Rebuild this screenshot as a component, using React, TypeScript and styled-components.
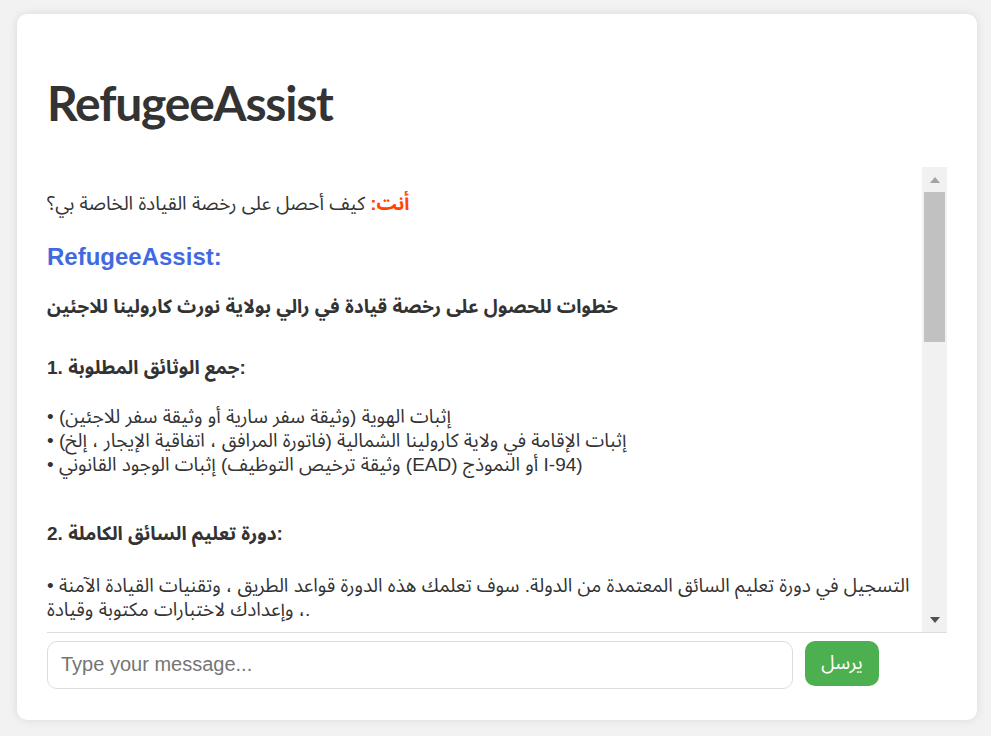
import styled, { createGlobalStyle } from 'styled-components';

const GlobalStyle = createGlobalStyle`
  html, body {
    margin: 0;
    padding: 0;
    background: #f2f2f2;
  }
  body {
    font-family: "Liberation Sans", Arial, "Noto Sans Arabic", "DejaVu Sans", sans-serif;
    color: #333;
  }
`;

const Page = styled.div`
  padding: 14px 14px 16px 17px;
`;

const Card = styled.div`
  width: 960px;
  box-sizing: border-box;
  background: #fff;
  border-radius: 10px;
  box-shadow: 0 0 10px rgba(0, 0, 0, 0.1);
  padding: 30px 30px 31px;
`;

const Title = styled.h1`
  margin: 30px 0 35px;
  font-family: Lato, "Open Sans", sans-serif;
  font-weight: 700;
  font-size: 48px;
  line-height: 1.2;
  letter-spacing: -1.2px;
  color: #333;
`;

const ChatFrame = styled.div`
  display: flex;
  height: 465px;
  border-bottom: 1px solid #ddd;
`;

const ChatScroll = styled.div`
  flex: 1;
  min-width: 0;
  overflow: hidden;
  padding-right: 12px;
  font-size: 19px;
  line-height: 24px;
`;

const ScrollTrack = styled.div`
  width: 25px;
  flex-shrink: 0;
  display: flex;
  flex-direction: column;
  background: #f1f1f1;
`;

const ArrowButton = styled.div`
  height: 25px;
  display: flex;
  align-items: center;
  justify-content: center;
`;

const Arrow = styled.span<{ $dir: 'up' | 'down'; $color: string }>`
  width: 0;
  height: 0;
  border-left: 5.5px solid transparent;
  border-right: 5.5px solid transparent;
  ${(p) =>
    p.$dir === 'up'
      ? `border-bottom: 6px solid ${p.$color}; margin-top: 1px;`
      : `border-top: 6px solid ${p.$color}; margin-top: 1px;`}
`;

const ThumbLane = styled.div`
  flex: 1;
  padding: 0 2px;
`;

const Thumb = styled.div`
  height: 150px;
  background: #c1c1c1;
`;

const UserLine = styled.p`
  margin: 25px 0 0;
`;

const UserTag = styled.strong`
  color: #ff4500;
`;

const BotLabel = styled.div`
  margin-top: 28px;
  font-size: 24px;
  line-height: 26px;
  font-weight: 700;
  color: #4169e1;
`;

const BoldLine = styled.p<{ $gap: number }>`
  margin: ${(p) => p.$gap}px 0 0;
  font-weight: 700;
`;

const BulletBlock = styled.div<{ $gap: number }>`
  margin-top: ${(p) => p.$gap}px;
`;

const Bullet = styled.div``;

const InputRow = styled.form`
  display: flex;
  align-items: flex-start;
  gap: 12px;
  margin-top: 8px;
`;

const MessageInput = styled.input`
  width: 746px;
  height: 48px;
  box-sizing: border-box;
  padding: 0 13px;
  border: 1px solid #ddd;
  border-radius: 10px;
  font-family: "Liberation Sans", Arial, sans-serif;
  font-size: 20px;
  color: #333;
  outline: none;

  &::placeholder {
    color: #757575;
  }
`;

const SendButton = styled.button`
  width: 74px;
  height: 45px;
  border: none;
  border-radius: 10px;
  background: #4caf50;
  color: #fff;
  font-family: "Liberation Sans", Arial, "Noto Sans Arabic", sans-serif;
  font-size: 19px;
  cursor: pointer;
`;

interface Step {
  title: string;
  items: string[];
}

const steps: Step[] = [
  {
    title: '1. جمع الوثائق المطلوبة:',
    items: [
      'إثبات الهوية (وثيقة سفر سارية أو وثيقة سفر للاجئين)',
      'إثبات الإقامة في ولاية كارولينا الشمالية (فاتورة المرافق ، اتفاقية الإيجار ، إلخ)',
      'إثبات الوجود القانوني (وثيقة ترخيص التوظيف (EAD) أو النموذج I-94)',
    ],
  },
  {
    title: '2. دورة تعليم السائق الكاملة:',
    items: [
      'التسجيل في دورة تعليم السائق المعتمدة من الدولة. سوف تعلمك هذه الدورة قواعد الطريق ، وتقنيات القيادة الآمنة ، وإعدادك لاختبارات مكتوبة وقيادة.',
    ],
  },
];

const App = () => (
  <>
    <GlobalStyle />
    <Page>
      <Card>
        <Title>RefugeeAssist</Title>
        <ChatFrame>
          <ChatScroll>
            <UserLine>
              <UserTag>أنت:</UserTag> كيف أحصل على رخصة القيادة الخاصة بي؟
            </UserLine>
            <BotLabel>RefugeeAssist:</BotLabel>
            <BoldLine $gap={25}>خطوات للحصول على رخصة قيادة في رالي بولاية نورث كارولينا للاجئين</BoldLine>
            {steps.map((step, i) => (
              <div key={step.title}>
                <BoldLine $gap={i === 0 ? 37 : 45}>{step.title}</BoldLine>
                <BulletBlock $gap={i === 0 ? 25 : 28}>
                  {step.items.map((item) => (
                    <Bullet key={item}>• {item}</Bullet>
                  ))}
                </BulletBlock>
              </div>
            ))}
          </ChatScroll>
          <ScrollTrack>
            <ArrowButton>
              <Arrow $dir="up" $color="#a3a3a3" />
            </ArrowButton>
            <ThumbLane>
              <Thumb />
            </ThumbLane>
            <ArrowButton>
              <Arrow $dir="down" $color="#505050" />
            </ArrowButton>
          </ScrollTrack>
        </ChatFrame>
        <InputRow onSubmit={(e) => e.preventDefault()}>
          <MessageInput placeholder="Type your message..." />
          <SendButton type="submit">يرسل</SendButton>
        </InputRow>
      </Card>
    </Page>
  </>
);

export default App;
